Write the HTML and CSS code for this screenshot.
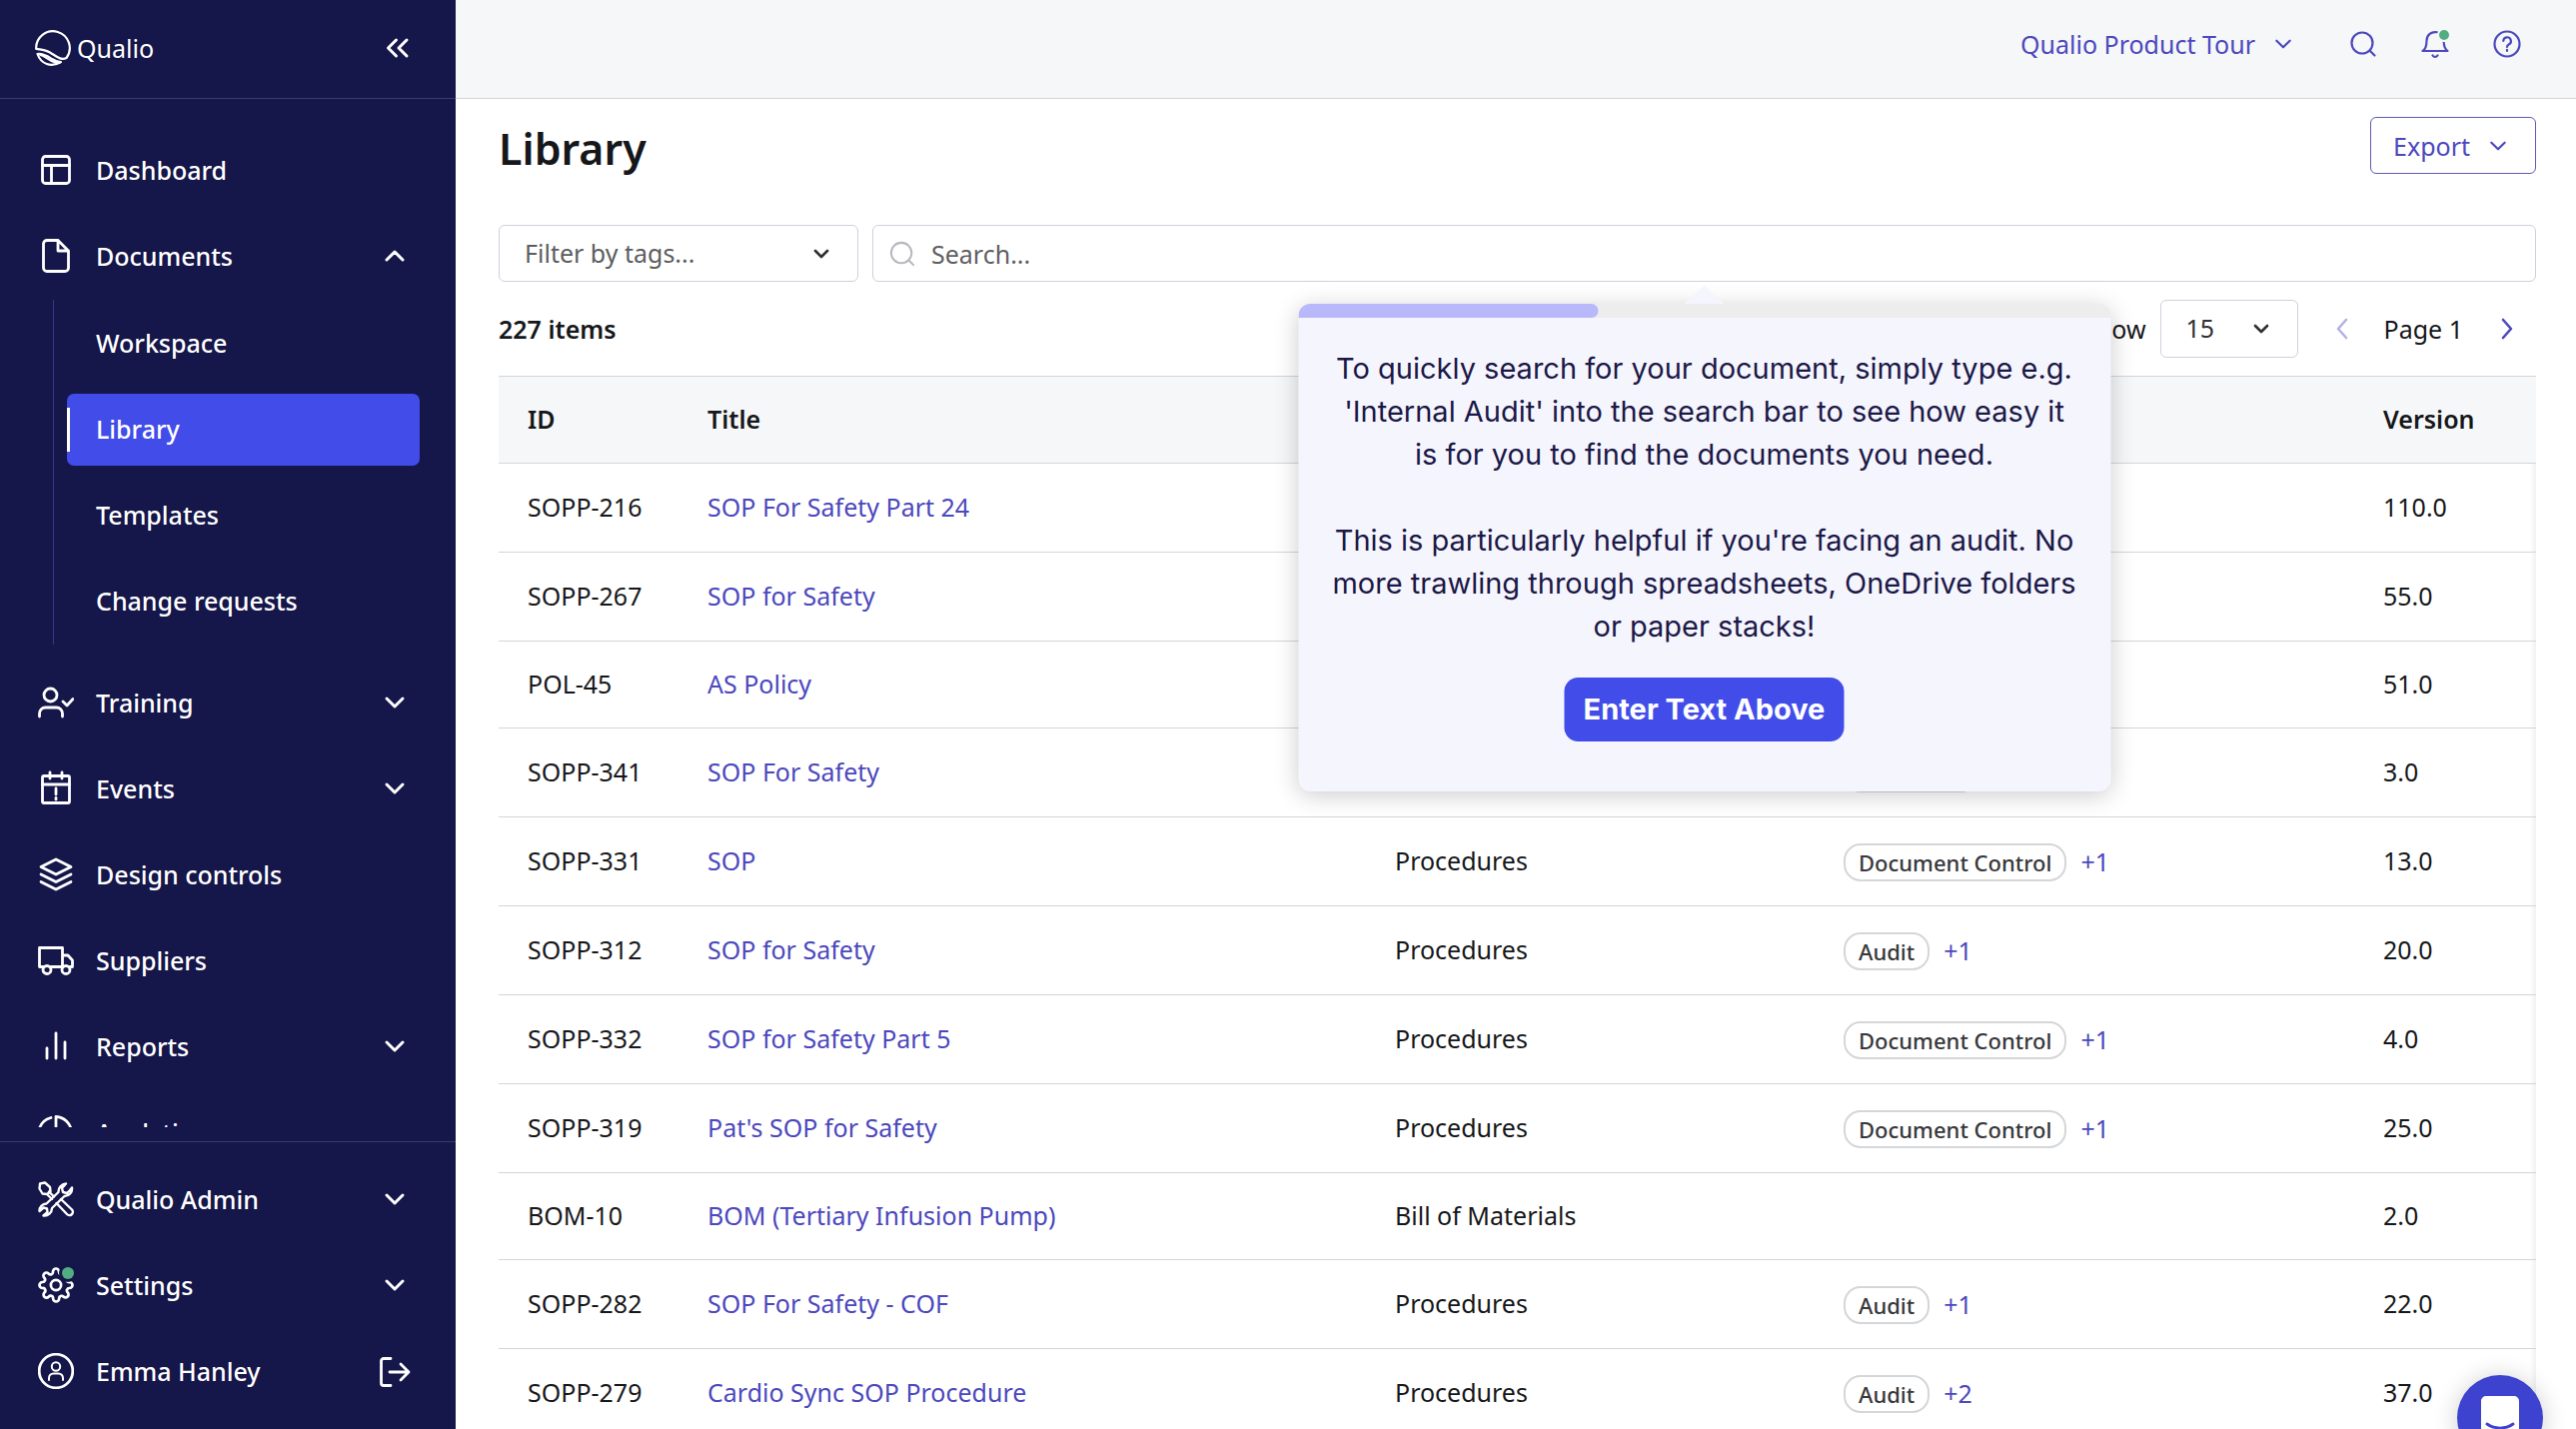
FILE: index.html
```html
<!DOCTYPE html>
<html lang="en">
<head>
<meta charset="utf-8">
<title>Library - Qualio</title>
<link rel="stylesheet" href="styles.css">
</head>
<body>
<svg class="sprite" aria-hidden="true">
  <symbol id="chev-down" viewBox="0 0 24 24"><path d="M4 8l8 8 8-8"/></symbol>
  <symbol id="chev-up" viewBox="0 0 24 24"><path d="M4 16l8-8 8 8"/></symbol>
</svg>
<div class="app">
  <aside class="sidebar">
    <div class="brand">
      <a class="logo" href="#">
        <svg class="logo-mark" viewBox="0 0 36 36"><path d="M1.200 19A16.800 16.800 0 1 1 31.500 28C26 31 21 26 15 22.500 10 19.800 5 19.500 1.200 19zM2.500 24C9 23.500 13 26.500 17 29c3 2 6 3 9 3C16 38 6 34 2.500 24z"/><path d="M5.500 25c4 1 7 4 11 6 3 1.500 5 2 8 2"/></svg>
        <span>Qualio</span>
      </a>
      <button class="icon-button" aria-label="Collapse menu">
        <svg class="icon-collapse" viewBox="0 0 24 24"><path d="M10.500 4L2.500 12l8 8M21 4l-8 8 8 8"/></svg>
      </button>
    </div>
    <nav class="nav">
      <ul class="menu">
        <li><a class="item" href="#"><svg class="icon" viewBox="0 0 36 36"><rect x="4.500" y="4.500" width="27" height="27" rx="3"/><path d="M4.500 13.500h27M13.500 13.500v18"/></svg><span>Dashboard</span></a></li>
        <li>
          <a class="item" href="#"><svg class="icon" viewBox="0 0 36 36"><path d="M20 2.500H9a3.500 3.500 0 0 0-3.500 3.500v24A3.500 3.500 0 0 0 9 33.500h18a3.500 3.500 0 0 0 3.500-3.500V13zM20 2.500V13h10.500"/></svg><span>Documents</span><svg class="chevron"><use href="#chev-up"/></svg></a>
          <ul class="submenu">
            <li><a class="item sub" href="#"><span>Workspace</span></a></li>
            <li><a class="item sub current" href="#"><span>Library</span></a></li>
            <li><a class="item sub" href="#"><span>Templates</span></a></li>
            <li><a class="item sub" href="#"><span>Change requests</span></a></li>
          </ul>
        </li>
        <li><a class="item" href="#"><svg class="icon" viewBox="0 0 36 36"><circle cx="12.500" cy="10.500" r="6.500"/><path d="M1.500 32v-3a6 6 0 0 1 6-6h11a6 6 0 0 1 6 6v3M25 17l4 4 6-6.500"/></svg><span>Training</span><svg class="chevron"><use href="#chev-down"/></svg></a></li>
        <li><a class="item" href="#"><svg class="icon" viewBox="0 0 36 36"><rect x="4.500" y="5.500" width="27" height="27" rx="1.500"/><path d="M4.500 14h27M12 2v6M24 2v6M18 18v6M18 27.500v1.500"/></svg><span>Events</span><svg class="chevron"><use href="#chev-down"/></svg></a></li>
        <li><a class="item" href="#"><svg class="icon" viewBox="0 0 36 36"><path d="M18 3L33 10.500 18 18 3 10.500zM3 18l15 7.500L33 18M3 25.500L18 33l15-7.500"/></svg><span>Design controls</span></a></li>
        <li><a class="item" href="#"><svg class="icon" viewBox="0 0 36 36"><path d="M5 24.500H1.500v-19h23v19H13M24.500 13H30l4.500 5v6.500H32M24.500 24.500h-1"/><circle cx="9" cy="27.500" r="4"/><circle cx="28" cy="27.500" r="4"/></svg><span>Suppliers</span></a></li>
        <li><a class="item" href="#"><svg class="icon" viewBox="0 0 36 36"><path d="M9 20v10M18 5v25M27 14v16"/></svg><span>Reports</span><svg class="chevron"><use href="#chev-down"/></svg></a></li>
        <li><a class="item" href="#"><svg class="icon" viewBox="0 0 36 36"><path d="M13 3.500A16 16 0 1 0 32 24M18 18V2.500A16 16 0 0 1 33.500 18z"/></svg><span>Analytics</span></a></li>
      </ul>
    </nav>
    <ul class="menu account">
      <li><a class="item" href="#"><svg class="icon thin" viewBox="0 0 36 36"><path d="M2 2.500l5-1 5 4.500.5 4.500-3.500 2.500-4.500-.5-3-5zM11 10.500l5 5M9 13l5 5M18.500 22L29 33a3 3 0 0 0 5-4.500L23 18"/><path d="M32 9l-3 3-4-1-1-4 4-4.500a8 8 0 0 0-7.500 8.500L8.500 22.500A7 7 0 0 0 1.500 30l4-3.500 3.500 1 .5 3.500-4 3.500A7.500 7.500 0 0 0 14 27L26.500 15A7.500 7.500 0 0 0 34 6.500z"/></svg><span>Qualio Admin</span><svg class="chevron"><use href="#chev-down"/></svg></a></li>
      <li><a class="item" href="#"><span class="badged"><svg class="icon" viewBox="0 0 24 24"><g class="gear"><circle cx="12" cy="12" r="3.400"/><path d="M19.400 15a1.650 1.650 0 0 0 .33 1.820l.06.06a2 2 0 1 1-2.830 2.830l-.06-.06a1.650 1.650 0 0 0-2.800 1.170V21a2 2 0 0 1-4 0v-.09A1.650 1.650 0 0 0 7.180 19.730l-.06.06a2 2 0 1 1-2.830-2.830l.06-.06A1.650 1.650 0 0 0 3.090 14H3a2 2 0 0 1 0-4h.09A1.650 1.650 0 0 0 4.270 7.180l-.06-.06a2 2 0 1 1 2.830-2.830l.06.06A1.650 1.650 0 0 0 10 3.090V3a2 2 0 0 1 4 0v.09a1.650 1.650 0 0 0 2.820 1.180l.06-.06a2 2 0 1 1 2.830 2.830l-.06.06A1.650 1.650 0 0 0 20.910 10H21a2 2 0 0 1 0 4h-.09a1.650 1.650 0 0 0-1.510 1z"/></g></svg><i class="dot"></i></span><span>Settings</span><svg class="chevron"><use href="#chev-down"/></svg></a></li>
      <li class="user"><a class="item" href="#"><svg class="icon" viewBox="0 0 36 36"><circle cx="18" cy="18" r="16.800"/><circle class="fine" cx="18" cy="13.500" r="4.200"/><path class="fine" d="M11 27v-2a4.500 4.500 0 0 1 4.500-4.500h5A4.500 4.500 0 0 1 25 25v2"/></svg><span>Emma Hanley</span></a>
        <button class="icon-button" aria-label="Log out"><svg class="icon-logout" viewBox="0 0 32 32"><path d="M12 2.500H5A2.500 2.500 0 0 0 2.500 5v22A2.500 2.500 0 0 0 5 29.500h7M11 16h19M22 8l8 8-8 8"/></svg></button></li>
    </ul>
  </aside>

  <div class="page">
    <header class="topbar">
      <button class="company">Qualio Product Tour<svg class="chevron-sm"><use href="#chev-down"/></svg></button>
      <button class="icon-button" aria-label="Search"><svg class="icon-top" viewBox="0 0 28 28"><circle cx="13" cy="13" r="10.500"/><path d="M20.500 20.500l5 5"/></svg></button>
      <button class="icon-button badged" aria-label="Notifications"><svg class="icon-top" viewBox="0 0 28 28"><path d="M16 2.300a8.500 8.500 0 0 0-10.500 8.500c0 5-1 8.500-4 10.200h25c-2.500-1.500-3.500-4.500-3.800-8.500M11.500 25.500a3 3 0 0 0 5 0"/></svg><i class="dot"></i></button>
      <button class="icon-button" aria-label="Help"><svg class="icon-top" viewBox="0 0 28 28"><circle cx="14" cy="14" r="12.500"/><path d="M10.300 11a3.800 3.800 0 1 1 5.400 3.500c-1.200.6-1.700 1-1.700 2.500M14 19.800v1.200"/></svg></button>
    </header>

    <main class="content">
      <div class="title-row">
        <h1>Library</h1>
        <button class="export">Export<svg class="chevron-sm"><use href="#chev-down"/></svg></button>
      </div>

      <div class="filters">
        <div class="select tags-filter">
          <select aria-label="Filter by tags"><option>Filter by tags...</option></select>
          <svg class="caret"><use href="#chev-down"/></svg>
        </div>
        <div class="search">
          <svg class="search-icon" viewBox="0 0 28 28"><circle cx="13" cy="13" r="11"/><path d="M21 21l5 5"/></svg>
          <input type="text" placeholder="Search..." aria-label="Search documents">
          <section class="tour" role="dialog" aria-label="Product tour">
            <div class="progress"><div class="progress-value"></div></div>
            <div class="tour-body">
              <p>To quickly search for your document, simply type e.g. 'Internal Audit' into the search bar to see how easy it is for you to find the documents you need.</p>
              <p>This is particularly helpful if you're facing an audit. No more trawling through spreadsheets, OneDrive folders or paper stacks!</p>
              <button class="tour-action">Enter Text Above</button>
            </div>
          </section>
        </div>
      </div>

      <div class="list-bar">
        <strong>227 items</strong>
        <div class="pager">
          <label for="page-size">Show</label>
          <div class="select page-size">
            <select id="page-size"><option>15</option></select>
            <svg class="caret"><use href="#chev-down"/></svg>
          </div>
          <button class="icon-button step" aria-label="Previous page" disabled><svg viewBox="0 0 24 24"><path d="M16 3l-8 9 8 9"/></svg></button>
          <span>Page 1</span>
          <button class="icon-button step" aria-label="Next page"><svg viewBox="0 0 24 24"><path d="M8 3l8 9-8 9"/></svg></button>
        </div>
      </div>

      <table class="docs">
        <colgroup><col class="c-id"><col><col class="c-type"><col class="c-tags"><col class="c-version"></colgroup>
        <thead><tr><th>ID</th><th>Title</th><th></th><th></th><th>Version</th></tr></thead>
        <tbody>
          <tr><td>SOPP-216</td><td><a href="#">SOP For Safety Part 24</a></td><td></td><td class="tags"></td><td>110.0</td></tr>
          <tr><td>SOPP-267</td><td><a href="#">SOP for Safety</a></td><td></td><td class="tags"></td><td>55.0</td></tr>
          <tr class="plain"><td>POL-45</td><td><a href="#">AS Policy</a></td><td></td><td class="tags"></td><td>51.0</td></tr>
          <tr><td>SOPP-341</td><td><a href="#">SOP For Safety</a></td><td></td><td class="tags"><span class="tag">Validation</span></td><td>3.0</td></tr>
          <tr><td>SOPP-331</td><td><a href="#">SOP</a></td><td>Procedures</td><td class="tags"><span class="tag">Document Control</span><a href="#">+1</a></td><td>13.0</td></tr>
          <tr><td>SOPP-312</td><td><a href="#">SOP for Safety</a></td><td>Procedures</td><td class="tags"><span class="tag">Audit</span><a href="#">+1</a></td><td>20.0</td></tr>
          <tr><td>SOPP-332</td><td><a href="#">SOP for Safety Part 5</a></td><td>Procedures</td><td class="tags"><span class="tag">Document Control</span><a href="#">+1</a></td><td>4.0</td></tr>
          <tr><td>SOPP-319</td><td><a href="#">Pat's SOP for Safety</a></td><td>Procedures</td><td class="tags"><span class="tag">Document Control</span><a href="#">+1</a></td><td>25.0</td></tr>
          <tr class="plain"><td>BOM-10</td><td><a href="#">BOM (Tertiary Infusion Pump)</a></td><td>Bill of Materials</td><td class="tags"></td><td>2.0</td></tr>
          <tr><td>SOPP-282</td><td><a href="#">SOP For Safety - COF</a></td><td>Procedures</td><td class="tags"><span class="tag">Audit</span><a href="#">+1</a></td><td>22.0</td></tr>
          <tr><td>SOPP-279</td><td><a href="#">Cardio Sync SOP Procedure</a></td><td>Procedures</td><td class="tags"><span class="tag">Audit</span><a href="#">+2</a></td><td>37.0</td></tr>
        </tbody>
      </table>
    </main>
  </div>
</div>
<button class="chat" aria-label="Open chat"><svg viewBox="0 0 86 86"><path class="bubble" d="M29 21h28a5 5 0 0 1 5 5v40l-9-5H29a5 5 0 0 1-5-5V26a5 5 0 0 1 5-5z"/><path class="smile" d="M30 49c8 5.500 18 5.500 26 0"/></svg></button>
</body>
</html>
```
FILE: styles.css
```css
* { box-sizing: border-box; }

body {
  margin: 0;
  font: 25px/36px "Noto Sans", sans-serif;
  color: #16171a;
  background: #fff;
  overflow: hidden;
}

ul { list-style: none; margin: 0; padding: 0; }
a { color: #4c48bd; text-decoration: none; }
button, input, select { font: inherit; color: inherit; margin: 0; }
button { background: none; border: 0; padding: 0; display: flex; align-items: center; justify-content: center; }
svg { display: block; fill: none; stroke: currentColor; stroke-linecap: round; stroke-linejoin: round; flex: none; }
.sprite { position: absolute; width: 0; height: 0; }

.app { display: flex; height: 100vh; overflow: hidden; }

/* Sidebar */
.sidebar {
  flex: none;
  width: 456px;
  display: flex;
  flex-direction: column;
  background: #151649;
  color: #fff;
  font-weight: 500;
}
.sidebar a { color: #fff; }
.brand {
  flex: none;
  height: 99px;
  display: flex;
  align-items: center;
  justify-content: space-between;
  padding: 0 46px 2px 35px;
  border-bottom: 1px solid #3b3c69;
}
.logo { display: flex; align-items: center; gap: 6px; font-weight: 400; }
.logo-mark { width: 36px; height: 36px; stroke-width: 2.2; }
.icon-collapse { width: 24px; height: 24px; stroke-width: 3; }
.nav { flex: 1; min-height: 0; overflow: hidden; padding-top: 29px; margin-bottom: 14px; }
.item {
  display: flex;
  align-items: center;
  gap: 22px;
  height: 72px;
  margin: 7px 0;
  padding: 0 49px 2px 38px;
}
.menu > li { display: flow-root; }
.icon { width: 36px; height: 36px; stroke-width: 2.8; }
.thin { stroke-width: 2.4; }
.fine { stroke-width: 2; }
.gear { stroke-width: 1.8; }
.chevron { width: 24px; height: 24px; stroke-width: 3; margin-left: auto; }
.submenu { margin: 0 0 16px 53px; padding-top: 1px; border-left: 1px solid #34378f; }
.submenu > li { display: flow-root; padding: 0 36px 0 13px; }
.sub { padding: 0 29px 2px; border-radius: 7px; }
.current {
  background: #424de9 linear-gradient(#fff, #fff) 0 center / 3px 44px no-repeat;
}
.account { flex: none; padding: 15px 0 14px; border-top: 1px solid #3b3c69; }
.menu > .user { display: flex; justify-content: space-between; padding-right: 45px; }
.user .item { padding-right: 0; }
.icon-logout { width: 32px; height: 32px; stroke-width: 2.8; }
.badged { position: relative; flex: none; }
.dot { position: absolute; right: 0; top: 0; width: 12px; height: 12px; border-radius: 50%; background: #53ad82; box-shadow: 0 0 0 3px #151649; }

/* Page */
.page { flex: 1; min-width: 0; }
.topbar {
  height: 99px;
  display: flex;
  align-items: center;
  justify-content: flex-end;
  gap: 44px;
  padding: 0 55px 10px 43px;
  background: #f6f7f9;
  border-bottom: 1px solid #d3d5d9;
  color: #4c48bd;
}
.company { gap: 18px; margin-right: 12px; }
.chevron-sm { width: 20px; height: 20px; stroke-width: 2.6; }
.icon-top { width: 28px; height: 28px; stroke-width: 2.2; }
.topbar .dot { width: 10px; height: 10px; box-shadow: 0 0 0 2px #f6f7f9; }

.content { padding: 18px 40px 0 43px; }
.title-row { display: flex; justify-content: space-between; align-items: flex-start; }
h1 { margin: 0; font-size: 43px; line-height: 64px; font-weight: 600; }
.export {
  height: 57px;
  gap: 18px;
  padding: 0 27px 0 22px;
  border: 1px solid #5f5bb8;
  border-radius: 6px;
  color: #4c48bd;
}

.filters { display: flex; gap: 14px; margin-top: 44px; }
.select { display: grid; grid-template-columns: 1fr; align-items: center; }
.select > * { grid-area: 1 / 1; }
.select select {
  width: 100%;
  height: 57px;
  padding: 0 25px 2px;
  border: 1px solid #cfd0dc;
  border-radius: 6px;
  background: #fff;
  appearance: none;
  color: #5c5d60;
}
.caret { width: 18px; height: 18px; stroke-width: 3.6; justify-self: end; margin-right: 28px; color: #303134; pointer-events: none; }
.tags-filter { flex: none; width: 360px; }

.search { position: relative; flex: 1; display: grid; align-items: center; }
.search > * { grid-area: 1 / 1; }
.search-icon { width: 26px; height: 26px; margin-left: 17px; stroke-width: 2.2; color: #b7b8bf; z-index: 1; }
.search input {
  width: 100%;
  height: 57px;
  padding: 0 20px 0 58px;
  border: 1px solid #cfd0dc;
  border-radius: 6px;
  background: #fff;
}
.search input::placeholder { color: #5f6063; opacity: 1; }

.list-bar { display: flex; align-items: center; justify-content: space-between; padding: 18px 0; }
.list-bar strong { font-weight: 600; }
.pager { display: flex; align-items: center; }
.page-size { width: 138px; margin: 0 32px 0 14px; }
.page-size select { height: 58px; color: #303134; }
.step { width: 24px; color: #4c48bd; }
.step svg { width: 24px; height: 24px; stroke-width: 2.6; }
.step:disabled { color: #b4b1e6; }
.pager span { margin: 0 32px 0 30px; }
.pager .step:last-child { margin-right: 17px; }

/* Documents table */
.docs {
  width: 100%;
  table-layout: fixed;
  border-spacing: 0;
  background: linear-gradient(90deg, #fff, #f1f1f2) right top / 6px 100% no-repeat;
}
.c-id { width: 180px; }
.c-type { width: 449px; }
.c-tags { width: 540px; }
.c-version { width: 182px; }
.docs th, .docs td { padding: 0 0 2px 29px; text-align: left; border-bottom: 1px solid #d3d5d9; white-space: nowrap; }
.docs th { height: 88px; background: #f6f7f9; border-top: 1px solid #d3d5d9; font-weight: 600; }
.docs td { height: 89px; }
.docs .tags { padding: 2px 0 0 29px; }
.docs .plain td { height: 87px; }
.tag {
  display: inline-block;
  height: 38px;
  padding: 0 13px;
  margin-right: 14px;
  border: 2px solid #d5d6d9;
  border-radius: 17px;
  font-size: 22px;
  line-height: 34px;
  font-weight: 500;
  color: #37383b;
}

/* Product tour popover */
.tour {
  position: absolute;
  z-index: 2;
  top: calc(100% + 22px);
  left: 50%;
  width: 813px;
  transform: translateX(-50%);
  border-radius: 12px;
  background: #f5f5fe;
  box-shadow: 0 4px 24px rgba(0, 0, 0, 0.2);
  font-family: Inter, sans-serif;
  color: #1b1846;
}
.tour::before {
  content: "";
  position: absolute;
  left: 50%;
  top: -18px;
  margin-left: -20px;
  border: 20px solid transparent;
  border-top: 0;
  border-bottom: 18px solid #f5f5fe;
}
.progress { height: 14px; border-radius: 12px 12px 0 0; overflow: hidden; background: #ededee; }
.progress-value { width: 37%; height: 14px; border-radius: 0 7px 7px 0; background: #b8b8fa; }
.tour-body { display: flex; flex-direction: column; align-items: center; padding: 29px 34px 50px; text-align: center; }
.tour p { margin: 0 0 43px; font-size: 29px; line-height: 43px; }
.tour p + p { margin-bottom: 30px; }
.tour-action {
  height: 64px;
  padding: 0 19px;
  border-radius: 14px;
  background: #424de9;
  color: #fff;
  font-size: 29px;
  font-weight: 700;
}

.chat {
  position: fixed;
  right: 33px;
  bottom: -32px;
  width: 86px;
  height: 86px;
  border-radius: 50%;
  background: #3d42cf;
  box-shadow: 0 2px 24px rgba(0, 0, 0, 0.2);
}
.chat svg { width: 86px; height: 86px; }
.bubble { fill: #fff; stroke: none; }
.smile { stroke: #3d42cf; stroke-width: 3; }
```
